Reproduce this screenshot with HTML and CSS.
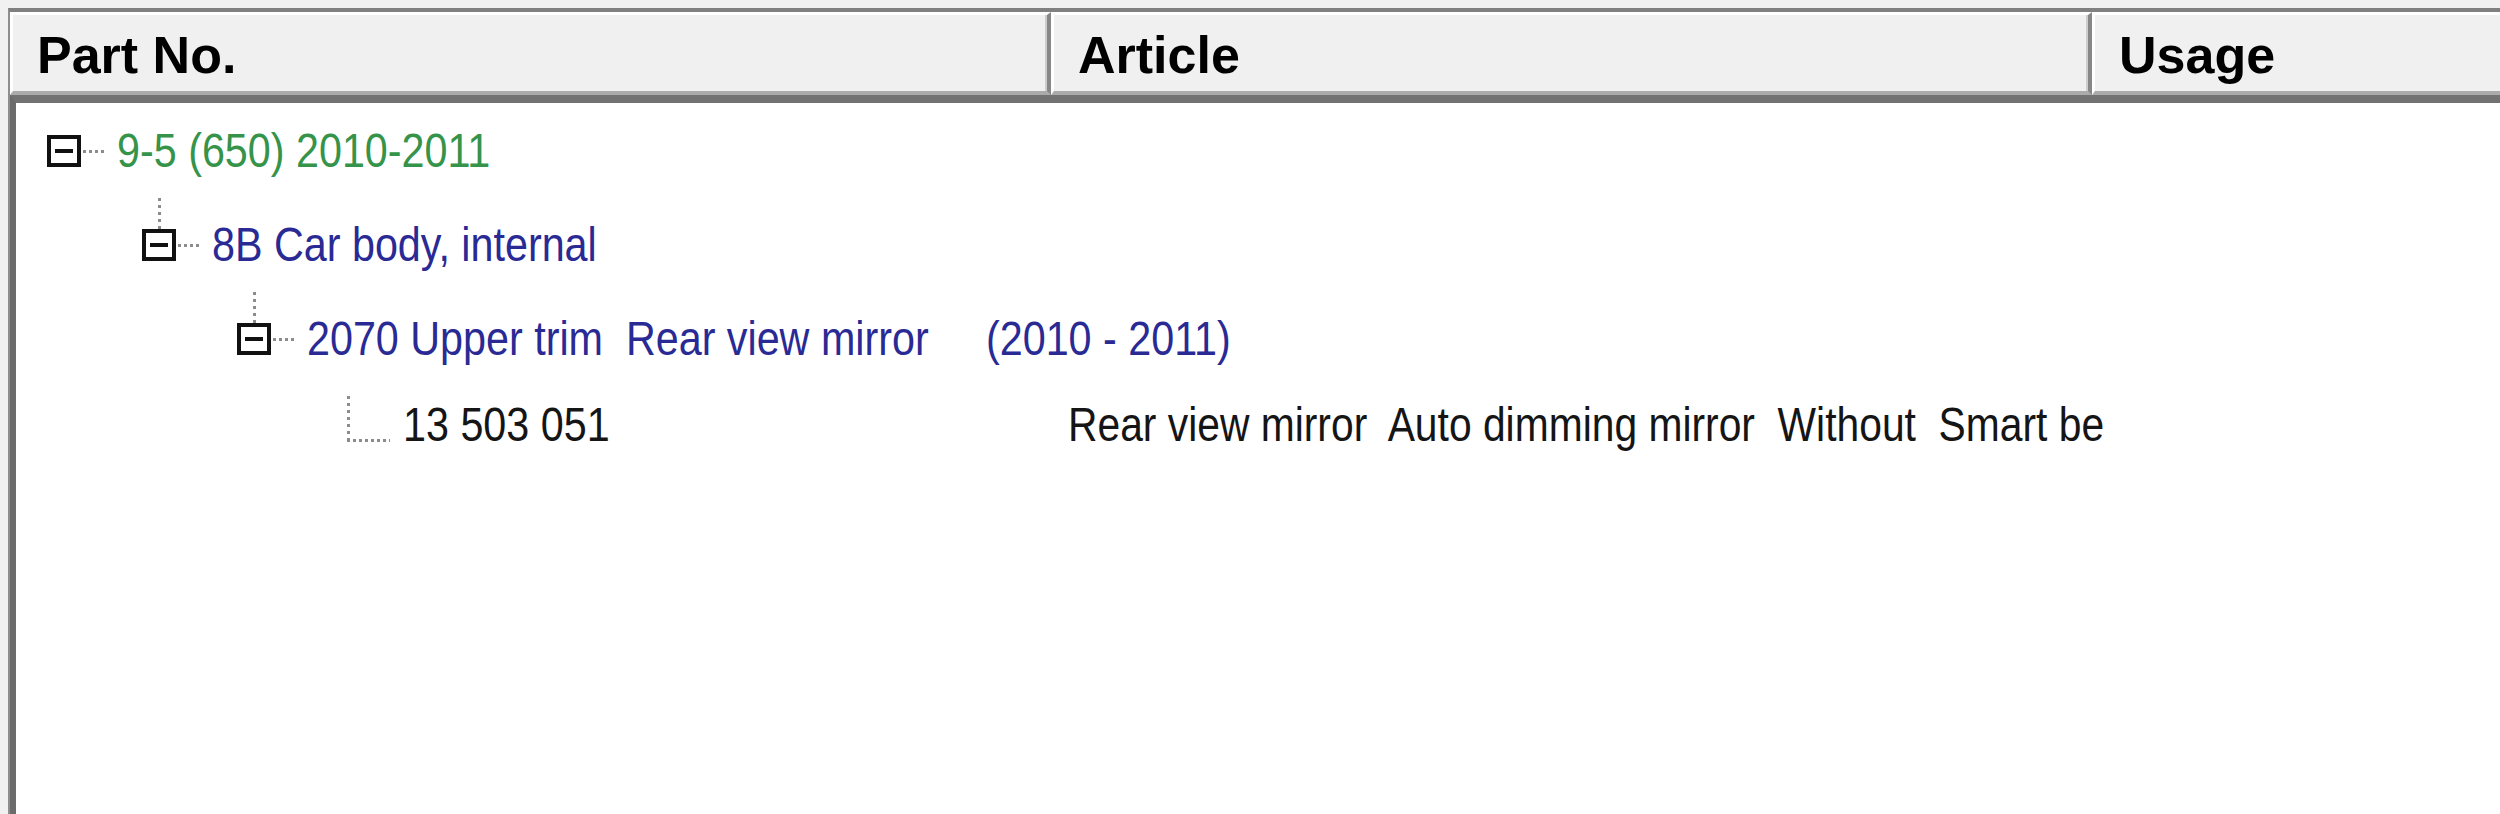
FILE: index.html
```html
<!DOCTYPE html>
<html lang="en">
<head>
<meta charset="utf-8">
<title>Parts tree</title>
<link rel="stylesheet" href="styles.css">
</head>
<body>
<div class="frame">
  <div class="header">
    <div class="hcell col-part">Part No.</div>
    <div class="hcell col-article">Article</div>
    <div class="hcell col-usage">Usage</div>
  </div>
  <div class="tree">
    <div class="row lvl0">
      <div class="node">
        <div class="vline none"></div>
        <div class="box"><span class="minus"></span></div>
        <div class="vfill"></div>
      </div>
      <div class="hline"></div>
      <span class="label green">9-5 (650) 2010-2011</span>
    </div>
    <div class="row lvl1">
      <div class="node">
        <div class="vline"></div>
        <div class="box"><span class="minus"></span></div>
        <div class="vfill"></div>
      </div>
      <div class="hline"></div>
      <span class="label blue">8B Car body, internal</span>
    </div>
    <div class="row lvl2">
      <div class="node">
        <div class="vline"></div>
        <div class="box"><span class="minus"></span></div>
        <div class="vfill"></div>
      </div>
      <div class="hline"></div>
      <span class="label blue">2070 Upper trim  Rear view mirror     (2010 - 2011)</span>
    </div>
    <div class="row leafrow">
      <div class="partcell">
        <div class="leaf"></div>
        <span class="label black">13 503 051</span>
      </div>
      <div class="articlecell">
        <span class="label black narrow">Rear view mirror  Auto dimming mirror  Without  Smart be</span>
      </div>
    </div>
  </div>
</div>
</body>
</html>
```

FILE: styles.css
```css
html, body {
  margin: 0;
  padding: 0;
  background: #f1f1f1;
  height: 100%;
  overflow: hidden;
}

.frame {
  margin: 8px 0 0 8px;
  height: calc(100vh - 8px);
  display: flex;
  flex-direction: column;
  border-top: 4px solid #808080;
  border-left: 2px solid #8e8e8e;
  box-sizing: border-box;
}

.header {
  display: flex;
  height: 83px;
  flex: 0 0 83px;
}

.hcell {
  box-sizing: border-box;
  height: 83px;
  background: #f0f0f0;
  border-top: 3px solid #ffffff;
  border-left: 3px solid #ffffff;
  border-bottom: 4px solid #ababab;
  display: flex;
  align-items: center;
  padding-left: 24px;
  padding-top: 4px;
  font-family: "Liberation Sans", Arial, sans-serif;
  font-weight: bold;
  font-size: 52px;
  color: #000;
  white-space: nowrap;
}

.col-part,
.col-article {
  width: 1041px;
  flex: 0 0 1041px;
  border-right: 4px solid #878787;
  box-shadow: inset -2px 0 0 #cdcdcd;
}

.col-usage {
  flex: 1;
}

.tree {
  flex: 1;
  background: #ffffff;
  border-left: 6px solid #6b6b6b;
  border-top: 8px solid #727272;
  padding-top: 1px;
}

.row {
  display: flex;
  align-items: center;
  height: 94px;
}

.lvl0 { padding-left: 31px; }
.lvl1 { padding-left: 126px; }
.lvl2 { padding-left: 221px; }

.node {
  display: flex;
  flex-direction: column;
  align-items: center;
  width: 34px;
  height: 94px;
}

.vline {
  width: 3px;
  height: 31px;
  flex: 0 0 31px;
  background: repeating-linear-gradient(180deg, #8c8c8c 0 3px, transparent 3px 7px);
}

.vline.none {
  background: none;
}

.vfill {
  flex: 1;
}

.box {
  box-sizing: border-box;
  width: 34px;
  height: 32px;
  flex: 0 0 32px;
  border: 4px solid #111111;
  background: #ffffff;
  display: flex;
  align-items: center;
  justify-content: center;
}

.minus {
  display: block;
  width: 18px;
  height: 4px;
  background: #111111;
}

.hline {
  width: 24px;
  height: 3px;
  margin: 0 10px 0 2px;
  background: repeating-linear-gradient(90deg, #8c8c8c 0 3px, transparent 3px 6px);
}

.label {
  display: inline-block;
  font-family: "Liberation Sans", Arial, sans-serif;
  font-size: 48px;
  line-height: 50px;
  white-space: pre;
  transform: scaleX(0.86);
  transform-origin: left center;
}

.label.narrow {
  transform: scaleX(0.85);
}

.green { color: #35934a; }
.blue { color: #2a2a95; }
.black { color: #151515; }

.leafrow {
  align-items: flex-start;
}

.partcell {
  width: 1035px;
  flex: 0 0 1035px;
  display: flex;
  align-items: flex-start;
  padding-left: 331px;
  box-sizing: border-box;
}

.leaf {
  width: 43px;
  height: 46px;
  margin-top: 10px;
  margin-right: 13px;
  background:
    repeating-linear-gradient(180deg, #8c8c8c 0 3px, transparent 3px 7px) left top / 3px 100% no-repeat,
    repeating-linear-gradient(90deg, #8c8c8c 0 3px, transparent 3px 6px) left bottom / 100% 3px no-repeat;
}

.partcell .label,
.articlecell .label {
  display: block;
  margin-top: 14px;
}

.articlecell {
  flex: 0 0 auto;
  padding-left: 17px;
}
```
